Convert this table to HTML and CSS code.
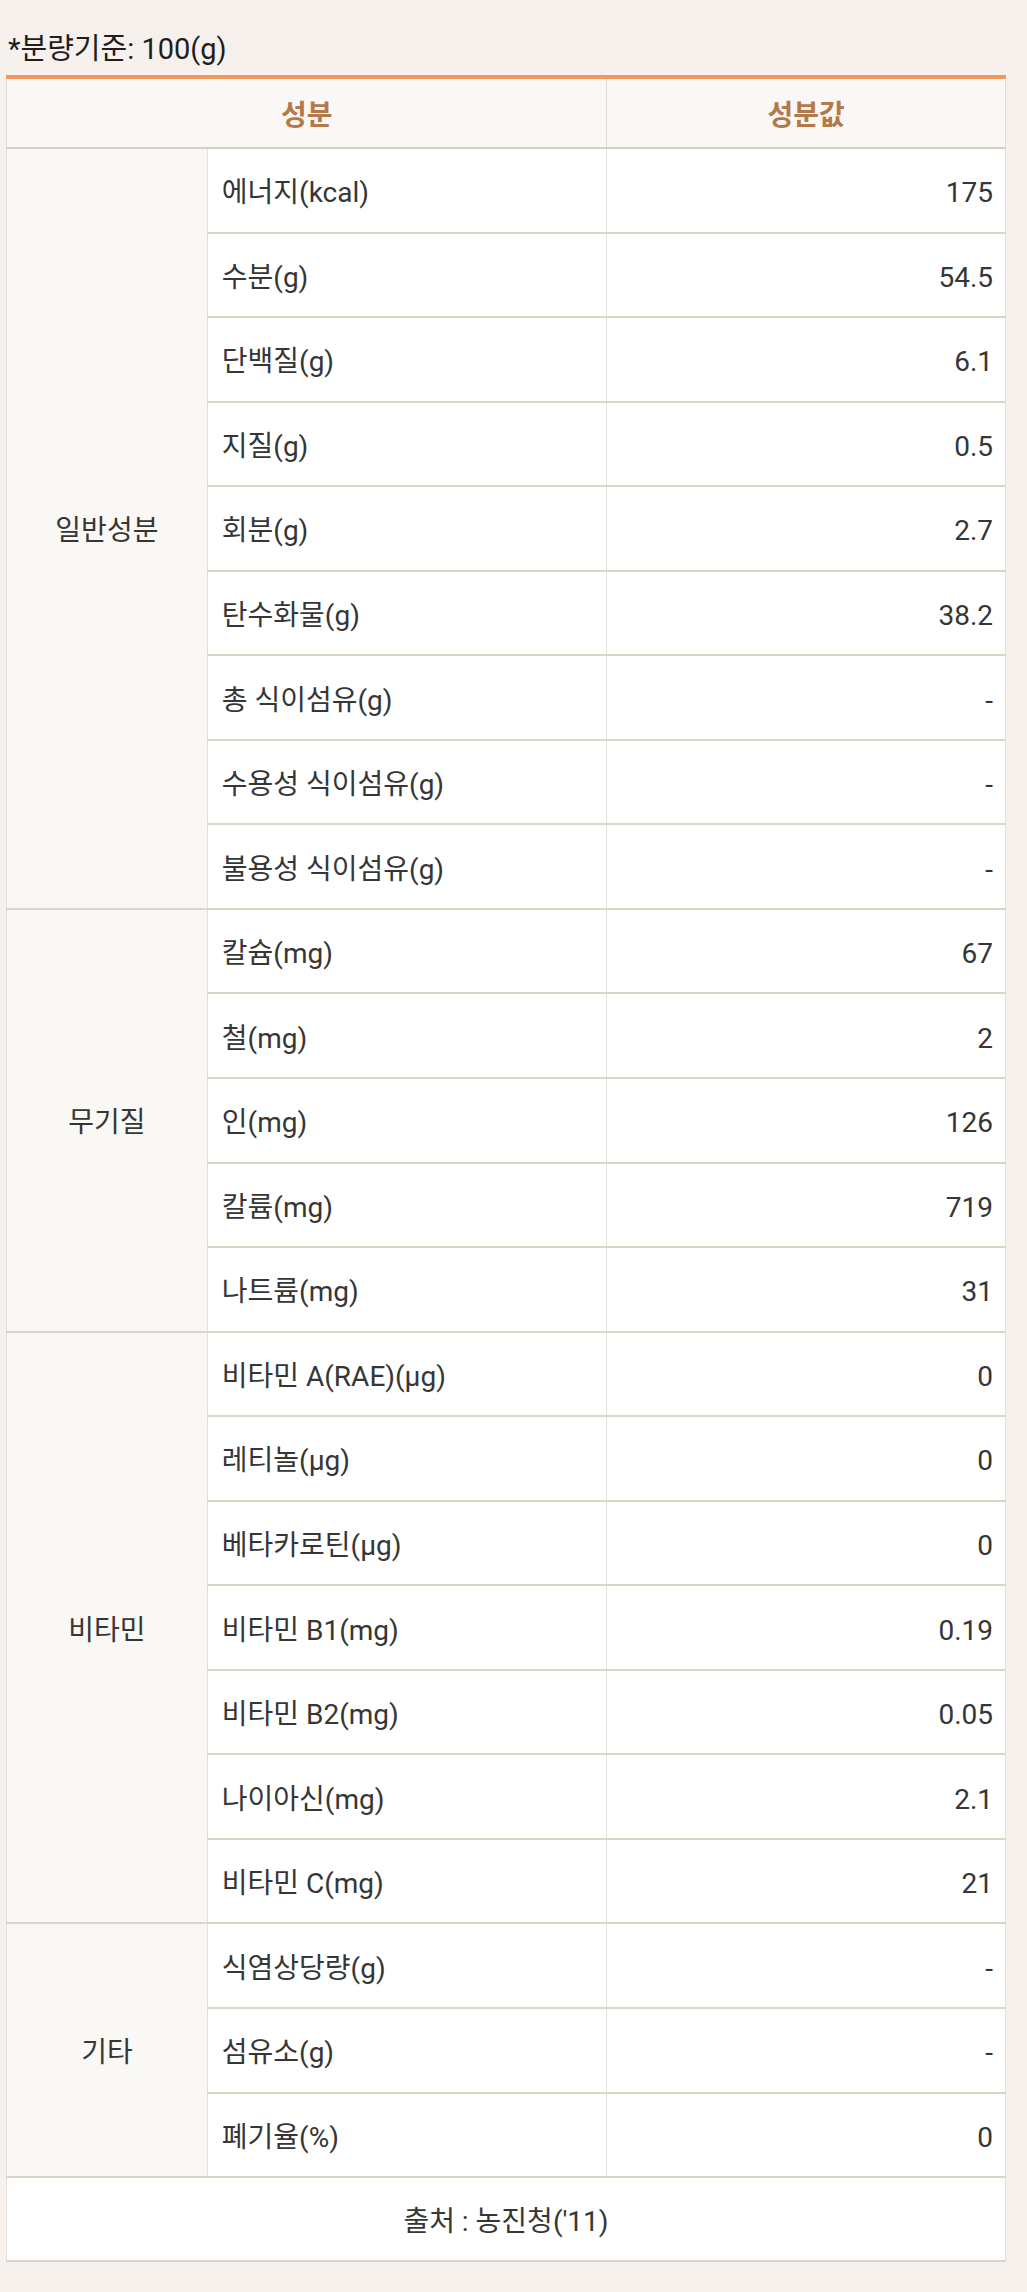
FILE: index.html
```html
<!DOCTYPE html>
<html lang="ko">
<head>
  <meta charset="UTF-8" />
  <meta name="viewport" content="width=device-width, initial-scale=1" />
  <title>영양성분</title>
  <link rel="stylesheet" href="styles.css">
</head>
<body>
  <div class="wrap">
    <p class="basis">*분량기준: 100(g)</p>
    <table class="nutri">
      <thead>
        <tr>
          <th colspan="2">성분</th>
          <th>성분값</th>
        </tr>
      </thead>
      <tbody>
        <tr><td class="group" rowspan="9">일반성분</td><td class="name">에너지(kcal)</td><td class="val">175</td></tr>
        <tr><td class="name">수분(g)</td><td class="val">54.5</td></tr>
        <tr><td class="name">단백질(g)</td><td class="val">6.1</td></tr>
        <tr><td class="name">지질(g)</td><td class="val">0.5</td></tr>
        <tr><td class="name">회분(g)</td><td class="val">2.7</td></tr>
        <tr><td class="name">탄수화물(g)</td><td class="val">38.2</td></tr>
        <tr><td class="name">총 식이섬유(g)</td><td class="val">-</td></tr>
        <tr><td class="name">수용성 식이섬유(g)</td><td class="val">-</td></tr>
        <tr><td class="name">불용성 식이섬유(g)</td><td class="val">-</td></tr>

        <tr><td class="group" rowspan="5">무기질</td><td class="name">칼슘(mg)</td><td class="val">67</td></tr>
        <tr><td class="name">철(mg)</td><td class="val">2</td></tr>
        <tr><td class="name">인(mg)</td><td class="val">126</td></tr>
        <tr><td class="name">칼륨(mg)</td><td class="val">719</td></tr>
        <tr><td class="name">나트륨(mg)</td><td class="val">31</td></tr>

        <tr><td class="group" rowspan="7">비타민</td><td class="name">비타민 A(RAE)(μg)</td><td class="val">0</td></tr>
        <tr><td class="name">레티놀(μg)</td><td class="val">0</td></tr>
        <tr><td class="name">베타카로틴(μg)</td><td class="val">0</td></tr>
        <tr><td class="name">비타민 B1(mg)</td><td class="val">0.19</td></tr>
        <tr><td class="name">비타민 B2(mg)</td><td class="val">0.05</td></tr>
        <tr><td class="name">나이아신(mg)</td><td class="val">2.1</td></tr>
        <tr><td class="name">비타민 C(mg)</td><td class="val">21</td></tr>

        <tr><td class="group" rowspan="3">기타</td><td class="name">식염상당량(g)</td><td class="val">-</td></tr>
        <tr><td class="name">섬유소(g)</td><td class="val">-</td></tr>
        <tr><td class="name">폐기율(%)</td><td class="val">0</td></tr>
      </tbody>
      <tfoot>
        <tr><td class="source" colspan="3">출처 : 농진청('11)</td></tr>
      </tfoot>
    </table>
  </div>
</body>
</html>
```

FILE: styles.css
```css
* {
  margin: 0; padding: 0; box-sizing: border-box;
}
html, body {
  background: #f6f1ec;
  font-family: Roboto, "Noto Sans CJK KR", sans-serif;
  color: #333;
}
.wrap {
  padding: 0 21px 29px 6px;
}
.basis {
  padding: 30px 0 0 2px;
  height: 75px;
  font-size: 29px;
  line-height: 38px;
  color: #1e1e1e;
}
.nutri {
  width: 100%;
  border-collapse: collapse;
  border-top: 4px solid #f3975a;
  background: #fff;
  font-size: 28px;
}
.nutri th {
  height: 71px;
  background: #faf8f6;
  color: #b57848;
  font-weight: 700;
  font-size: 28px;
  text-align: center;
  border: 1px solid #e0ddd8;
  border-bottom: 2px solid #d8d0c2;
  width: 399px;
}
.nutri td {
  height: 84.55px;
  padding-top: 6px;
  border: 1px solid #e3e1de;
  border-top: 2px solid #ddd5c8;
  line-height: 30px;
  color: #363636;
}
.nutri .group {
  width: 201px;
  background: #faf8f5;
  text-align: center;
}
.nutri .name {
  padding-left: 14px;
  width: 400px;
}
.nutri .val {
  padding-right: 12px;
  text-align: right;
}
.nutri .source {
  height: 84px;
  text-align: center;
  border-bottom: 2px solid #d9d3ca;
}
```
